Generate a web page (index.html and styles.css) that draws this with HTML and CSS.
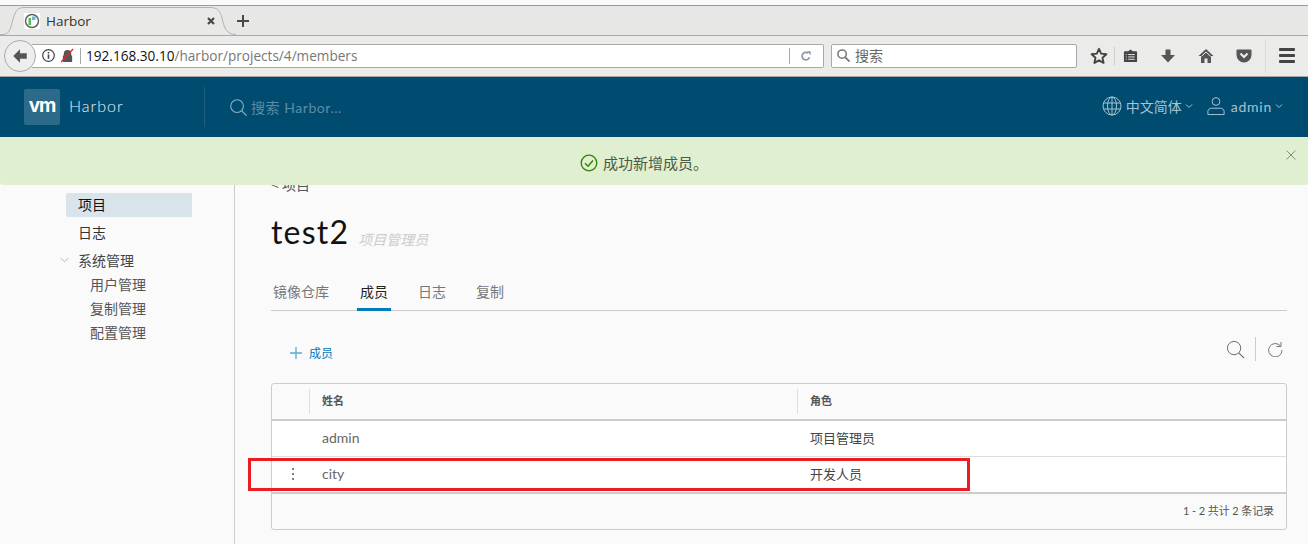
FILE: index.html
```html
<!DOCTYPE html>
<html lang="zh-CN">
<head>
<meta charset="utf-8">
<title>Harbor</title>
<link rel="stylesheet" href="styles.css">
</head>
<body>
<div class="page">
  <div class="chrome">
    <div class="tabbar">
      <svg class="tab-shape" viewBox="0 0 238 30"><path d="M0 28.500H3C11 28.500 11 19 14 10C16 4 18 1.500 25 1.500H210C218 1.500 220 5 222 12C224 21 226 28.500 236 28.500" fill="#e9e9e7" stroke="#b0b4b8" stroke-width="1"/></svg>
      <div class="tab">
        <svg class="favicon" viewBox="0 0 16 16"><rect width="16" height="16" fill="#fff"/><circle cx="8" cy="8" r="6.500" fill="none" stroke="#5a6a60" stroke-width="1.500"/><rect x="4.500" y="5" width="2.500" height="7" fill="#5cb85c"/><rect x="8" y="3.500" width="3.500" height="3.500" fill="#6fb3d9"/></svg>
        <span class="tab-title">Harbor</span>
        <svg class="tab-close" viewBox="0 0 10 10"><path d="M2 2l6 6M8 2l-6 6" stroke="#4a4a4a" stroke-width="2.200" fill="none"/></svg>
      </div>
      <svg class="tab-new" viewBox="0 0 14 14"><path d="M7 1v12M1 7h12" stroke="#4a4a4a" stroke-width="2" fill="none"/></svg>
    </div>
    <div class="toolbar">
      <div class="back"><svg viewBox="0 0 16 16"><path d="M8 2L2 8l6 6V10.500h6v-5H8z" fill="#555"/></svg></div>
      <div class="urlbar">
        <svg class="info" viewBox="0 0 16 16"><circle cx="8" cy="8" r="6.200" fill="none" stroke="#444" stroke-width="1.300"/><path d="M8 7v4.500M8 4.200v1.600" stroke="#444" stroke-width="1.700"/></svg>
        <svg class="lock" viewBox="0 0 14 16"><path d="M3 8V6a4 4 0 0 1 8 0v2h1v7H2V8z" fill="#555"/><path d="M0 15L13 1" stroke="#e22" stroke-width="1.400"/></svg>
        <span class="url-sep"></span>
        <span class="url"><span class="url-host">192.168.30.10</span>/harbor/projects/4/members</span>
        <span class="url-sep2"></span>
        <svg class="reload" viewBox="0 0 14 14"><path d="M11 8.500A4.400 4.400 0 1 1 9.500 3.600" fill="none" stroke="#8a98a8" stroke-width="2"/><path d="M8 1.500h4.500V6z" fill="#8a98a8"/></svg>
      </div>
      <div class="searchbar">
        <svg viewBox="0 0 16 16"><circle cx="6.500" cy="6.500" r="4.500" fill="none" stroke="#777" stroke-width="1.600"/><path d="M10 10l4.500 4.500" stroke="#777" stroke-width="2"/></svg>
        <span>搜索</span>
      </div>
      <div class="tools">
        <svg class="t-star" viewBox="0 0 18 18"><path d="M9 1.800l2.200 4.800 5.200.6-3.900 3.500 1.100 5.200L9 13.300l-4.600 2.600 1.100-5.200L1.600 7.200l5.200-.6z" fill="none" stroke="#444" stroke-width="1.900" stroke-linejoin="round"/></svg>
        <span class="t-sep"></span>
        <svg class="t-clip" viewBox="0 0 16 16"><path d="M2 3.500h3.500L8 1.500l2.500 2H14a1 1 0 0 1 1 1V14a1 1 0 0 1-1 1H2a1 1 0 0 1-1-1V4.500a1 1 0 0 1 1-1z" fill="#444"/><path d="M5.500 7h7M5.500 9.500h7M5.500 12h7M3 7h1M3 9.500h1M3 12h1" stroke="#eee" stroke-width="1"/></svg>
        <svg class="t-down" viewBox="0 0 16 16"><path d="M5.500 1.500h5V7H15l-7 7.500L1 7h4.500z" fill="#555"/></svg>
        <svg class="t-home" viewBox="0 0 16 16"><path d="M8 1L0.500 8h2.500v7h3.500v-4.500h3V15H13V8h2.500z" fill="#555"/><path d="M8 4L3.500 8.300M8 4l4.500 4.300" stroke="#eee" stroke-width="1" fill="none"/></svg>
        <svg class="t-pocket" viewBox="0 0 16 16"><path d="M1.500 1.500h13a1 1 0 0 1 1 1V7a7.500 7.500 0 0 1-15 0V2.500a1 1 0 0 1 1-1z" fill="#555"/><path d="M4.500 5.500L8 9l3.500-3.500" stroke="#eee" stroke-width="2" fill="none"/></svg>
        <span class="t-sep2"></span>
        <div class="t-menu"><i></i><i></i><i></i></div>
      </div>
    </div>
  </div>

  <header class="header">
    <div class="brand">
      <div class="logo">vm</div>
      <span class="brand-name">Harbor</span>
    </div>
    <div class="global-search">
      <svg viewBox="0 0 20 20"><circle cx="8.500" cy="8.500" r="6.700" fill="none" stroke="#8fb3c6" stroke-width="1.100"/><path d="M13.500 13.500l5 5" stroke="#8fb3c6" stroke-width="1.300"/></svg>
      <span>搜索 Harbor...</span>
    </div>
    <div class="header-right">
      <svg class="globe" viewBox="0 0 20 20"><g fill="none" stroke="#a5c3d3" stroke-width="1"><circle cx="10" cy="10" r="9"/><ellipse cx="10" cy="10" rx="4.500" ry="9"/><path d="M10 1v18M1.500 7h17M1.500 13h17"/></g></svg>
      <span class="lang">中文简体</span>
      <svg class="caret" viewBox="0 0 8 6"><path d="M1 1.500l3 3 3-3" fill="none" stroke="#a5c3d3" stroke-width="1"/></svg>
      <svg class="user" viewBox="0 0 20 21"><g fill="none" stroke="#a5c3d3" stroke-width="1.100"><circle cx="10" cy="5.500" r="4.300"/><path d="M1 20v-3.500c0-2 2-3.500 4-3.500h10c2 0 4 1.500 4 3.500V20z"/></g></svg>
      <span class="admin">admin</span>
      <svg class="caret" viewBox="0 0 8 6"><path d="M1 1.500l3 3 3-3" fill="none" stroke="#a5c3d3" stroke-width="1"/></svg>
    </div>
  </header>

  <div class="body">
    <div class="alert">
      <svg class="alert-icon" viewBox="0 0 18 18"><circle cx="9" cy="9" r="7.800" fill="none" stroke="#2f8400" stroke-width="1.300"/><path d="M5 9.200l3 3 5-5.700" fill="none" stroke="#2f8400" stroke-width="1.400"/></svg>
      <span>成功新增成员。</span>
      <svg class="alert-close" viewBox="0 0 10 10"><path d="M.5.500l9 9M9.500.500l-9 9" stroke="#7f8c85" stroke-width="1" fill="none"/></svg>
    </div>

    <nav class="sidebar">
      <a class="nav-item active">项目</a>
      <a class="nav-item logs">日志</a>
      <div class="nav-group">
        <svg viewBox="0 0 10 6"><path d="M1 1l4 4 4-4" fill="none" stroke="#aaa" stroke-width="1"/></svg>
        <span>系统管理</span>
      </div>
      <a class="nav-sub">用户管理</a>
      <a class="nav-sub">复制管理</a>
      <a class="nav-sub">配置管理</a>
    </nav>

    <main class="main">
      <div class="crumb">&lt; 项目</div>
      <div class="title-row">
        <h1>test2</h1>
        <span class="role">项目管理员</span>
      </div>
      <div class="tabs">
        <a class="ptab">镜像仓库</a>
        <a class="ptab on">成员</a>
        <a class="ptab logs-tab">日志</a>
        <a class="ptab">复制</a>
      </div>
      <div class="actions">
        <a class="add"><svg viewBox="0 0 12 12"><path d="M6 0v12M0 6h12" stroke="#5bacd4" stroke-width="1.300" fill="none"/></svg>成员</a>
        <div class="action-icons">
          <svg class="a-search" viewBox="0 0 20 20"><circle cx="8.500" cy="8.500" r="7" fill="none" stroke="#666" stroke-width="1"/><path d="M13.500 13.500l5.500 5.500" stroke="#666" stroke-width="1.100"/></svg>
          <span class="a-sep"></span>
          <svg class="a-refresh" viewBox="0 0 16 16"><path d="M13.500 5A6.700 6.700 0 1 0 15 9" fill="none" stroke="#777" stroke-width="1"/><path d="M14 1v4.500H9.500" fill="none" stroke="#777" stroke-width="1"/></svg>
        </div>
      </div>
      <div class="grid">
        <div class="g-row g-head">
          <div class="g-act"></div>
          <div class="g-name">姓名</div>
          <div class="g-role">角色</div>
        </div>
        <div class="g-row g-data">
          <div class="g-act"></div>
          <div class="g-name">admin</div>
          <div class="g-role">项目管理员</div>
        </div>
        <div class="g-row g-data last">
          <div class="g-act"><span class="dots"><i></i><i></i><i></i></span></div>
          <div class="g-name">city</div>
          <div class="g-role">开发人员</div>
        </div>
        <div class="g-foot">1 - 2 共计 2 条记录</div>
      </div>
    </main>
    <div class="redbox"></div>
  </div>
</div>
</body>
</html>
```
FILE: styles.css
```css
* { box-sizing: border-box; }
html, body { margin: 0; padding: 0; }
body { font-family: "Open Sans", "Noto Sans CJK SC", sans-serif; background: #fafafa; }
.page { width: 1308px; height: 544px; overflow: hidden; display: flex; flex-direction: column; }
svg { display: block; flex: none; }

.chrome { height: 77px; padding-top: 5px; border-bottom: 1px solid #a6a6a6; flex: none; }
.tabbar { height: 31px; border-top: 1px solid #9b9b9b; border-bottom: 1px solid #a8a8a8; display: flex; align-items: center; padding-left: 16px; background: #e7e7e5; position: relative; }
.tab-shape { position: absolute; left: 0; top: 0; width: 238px; height: 30px; }
.tab { width: 212px; height: 29px; padding: 0 12px 0 8px; display: flex; align-items: center; position: relative; }
.favicon { width: 16px; height: 16px; }
.tab-title { margin-left: 6px; font: 13.500px "Open Sans", sans-serif; color: #333; flex: 1; }
.tab-close { width: 10px; height: 10px; }
.tab-new { width: 14px; height: 14px; margin-left: 8px; position: relative; }
.toolbar { height: 40px; display: flex; align-items: center; padding-left: 4px; padding-bottom: 1px; background: #ebebe9; }
.back { width: 32px; height: 32px; border-radius: 50%; background: #eee; border: 1px solid #a9a9a9; display: flex; align-items: center; justify-content: center; position: relative; z-index: 1; }
.back svg { width: 18px; height: 18px; }
.urlbar { width: 792px; height: 24px; margin-left: -4px; background: #fff; border: 1px solid #a9a9a9; border-left: 0; border-radius: 0 2px 2px 0; display: flex; align-items: center; padding-left: 9px; }
.info { width: 15px; height: 15px; }
.lock { width: 13px; height: 15px; margin-left: 5px; }
.url-sep { width: 1px; height: 16px; background: #aaa; margin: 0 5px 0 6px; }
.url { font: 13.600px "Open Sans", sans-serif; color: #777; flex: 1; white-space: nowrap; padding-bottom: 1px; }
.url-host { color: #111; }
.url-sep2 { width: 1px; height: 16px; background: #aaa; margin-right: 10px; }
.reload { width: 12px; height: 12px; margin-right: 11px; }
.searchbar { width: 246px; height: 24px; margin-left: 7px; background: #fff; border: 1px solid #a9a9a9; border-radius: 2px; display: flex; align-items: center; padding-left: 4px; font: 14px "Noto Sans CJK SC", sans-serif; color: #666; }
.searchbar svg { width: 15px; height: 15px; margin-right: 4px; }
.searchbar span { margin-top: -2px; }
.tools { display: flex; align-items: center; margin-left: 13px; }
.t-star { width: 18px; height: 18px; }
.t-sep { width: 1px; height: 18px; background: #ccc; margin-left: 6px; }
.t-clip { width: 15px; height: 15px; margin-left: 8px; }
.t-down { width: 16px; height: 16px; margin-left: 22px; }
.t-home { width: 16px; height: 16px; margin-left: 22px; }
.t-pocket { width: 16px; height: 16px; margin-left: 22px; }
.t-sep2 { width: 1px; height: 34px; background: #dcdcdc; margin-left: 13px; }
.t-menu { width: 16px; margin-left: 13px; display: flex; flex-direction: column; gap: 3px; }
.t-menu i { display: block; height: 3px; background: #444; border-radius: 1px; }

.header { height: 60px; background: #004c70; display: flex; align-items: center; padding-left: 24px; flex: none; }
.brand { width: 180px; height: 36px; display: flex; align-items: center; }
.logo { width: 36px; height: 36px; border-radius: 2px; background: #2c6a8a; color: #fff; font: 700 19px/34px "Inter", sans-serif; letter-spacing: -1px; text-align: center; }
.brand-name { margin: -3px 0 0 9px; font: 300 16px Lato, sans-serif; color: #e8f0f4; letter-spacing: 1px; }
.global-search { height: 40px; flex: 1; border-left: 1px solid #1c5f80; display: flex; align-items: center; padding-left: 24px; font: 14px Lato, "Noto Sans CJK SC", sans-serif; color: #5d8ba3; letter-spacing: .55px; }
.global-search svg { width: 19px; height: 19px; margin-right: 3px; }
.header-right { display: flex; align-items: center; padding-right: 25px; padding-bottom: 2px; font: 14px Lato, "Noto Sans CJK SC", sans-serif; color: #a5c3d3; }
.globe { width: 20px; height: 20px; margin-right: 4px; }
.caret { width: 8px; height: 6px; margin-left: 3px; }
.user { width: 18px; height: 20px; margin-left: 14px; margin-right: 6px; }
.admin { letter-spacing: .75px; }

.body { flex: 1; display: flex; position: relative; min-height: 0; }
.alert { position: absolute; left: 0; right: 0; top: 0; height: 48px; background: #dfefd0; border-radius: 0 0 3px 3px; display: flex; align-items: center; justify-content: center; z-index: 2; font: 15px "Noto Sans CJK SC", sans-serif; color: #4d5a48; padding-right: 20px; padding-top: 3px; }
.alert-icon { width: 18px; height: 18px; margin-right: 5px; }
.alert-close { position: absolute; right: 12px; top: 13px; width: 10px; height: 10px; }
.sidebar { width: 235px; flex: none; border-right: 1px solid #ccc; padding: 56px 0 0 66px; display: flex; flex-direction: column; font: 14px "Noto Sans CJK SC", sans-serif; color: #444; }
.nav-item { display: block; width: 126px; height: 24px; line-height: 22px; padding-left: 12px; border-radius: 2px 0 0 2px; color: #333; }
.nav-item.active { background: #d9e4ea; color: #111; }
.nav-item.logs { margin-top: 4px; }
.nav-group { height: 24px; margin-top: 4px; display: flex; align-items: center; margin-left: -6px; padding-bottom: 3px; }
.nav-group svg { width: 9px; height: 6px; margin-right: 9px; }
.nav-sub { display: block; height: 24px; line-height: 22px; padding-left: 24px; color: #555; }

.main { flex: 1; min-width: 0; padding: 39px 21px 0 36px; }
.crumb { height: 16px; font: 14px/16px "Noto Sans CJK SC", sans-serif; color: #555; }
.title-row { display: flex; align-items: baseline; margin-top: 21px; height: 46px; }
h1 { margin: 0; font: 400 32px/38px Lato, sans-serif; color: #111; letter-spacing: 1.200px; }
.role { margin: 0 0 -1px 9px; font: italic 14px "Noto Sans CJK SC", sans-serif; color: #ccc; position: relative; top: 1px; }
.tabs { display: flex; height: 31px; margin-top: 21px; border-bottom: 1px solid #ccc; padding-left: 2px; font: 14px/20px "Noto Sans CJK SC", sans-serif; color: #777; }
.ptab { display: block; height: 31px; padding-top: 1px; margin-right: 28px; }
.ptab.on { color: #222; border-bottom: 3px solid #007cbb; width: 34px; padding-left: 3px; margin-right: 27px; white-space: nowrap; }
.ptab.logs-tab { margin-right: 30px; }
.actions { height: 72px; display: flex; justify-content: space-between; align-items: flex-start; }
.add { display: flex; align-items: center; margin: 34px 0 0 19px; font: 12px/16px "Noto Sans CJK SC", sans-serif; color: #0079b8; }
.add svg { width: 12px; height: 12px; margin-right: 7px; }
.action-icons { display: flex; align-items: center; margin-top: 26px; }
.a-search { width: 19px; height: 19px; }
.a-sep { width: 1px; height: 24px; background: #ccc; margin: 0 11px 0 10px; }
.a-refresh { width: 16px; height: 16px; margin-right: 4px; }
.grid { border: 1px solid #ccc; border-radius: 3px; background: #fafafa; }
.g-row { display: flex; align-items: stretch; }
.g-act { width: 37px; flex: none; display: flex; align-items: center; justify-content: center; position: relative; }
.g-name { width: 488px; flex: none; padding-left: 12px; display: flex; align-items: center; }
.g-role { flex: 1; padding-left: 12px; display: flex; align-items: center; }
.g-head { height: 37px; border-bottom: 2px solid #ccc; font: 700 11px "Noto Sans CJK SC", sans-serif; color: #565656; }
.g-head .g-name, .g-head .g-role { border-left: 1px solid #ddd; margin: 5px 0 5px; padding-bottom: 4px; }
.g-data { height: 36px; background: #fff; border-bottom: 1px solid #ddd; font: 14px Lato, "Noto Sans CJK SC", sans-serif; color: #666; }
.g-data .g-name { width: 487px; margin-left: 1px; padding-bottom: 3px; }
.g-data .g-role { margin-left: 1px; color: #444; font-size: 13px; padding-bottom: 3px; }
.g-data.last { border-bottom: 2px solid #ccc; height: 37px; }
.dots { display: flex; flex-direction: column; gap: 3px; margin-left: 5px; margin-top: -1px; }
.dots i { display: block; width: 2px; height: 2px; background: #555; border-radius: 50%; }
.g-foot { height: 35px; display: flex; align-items: center; justify-content: flex-end; padding-right: 12px; padding-bottom: 4px; font: 11px Lato, "Noto Sans CJK SC", sans-serif; color: #565656; letter-spacing: -.1px; }
.redbox { position: absolute; left: 248px; top: 321px; width: 722px; height: 33px; border: 3px solid #ed1c24; z-index: 1; pointer-events: none; }
```
